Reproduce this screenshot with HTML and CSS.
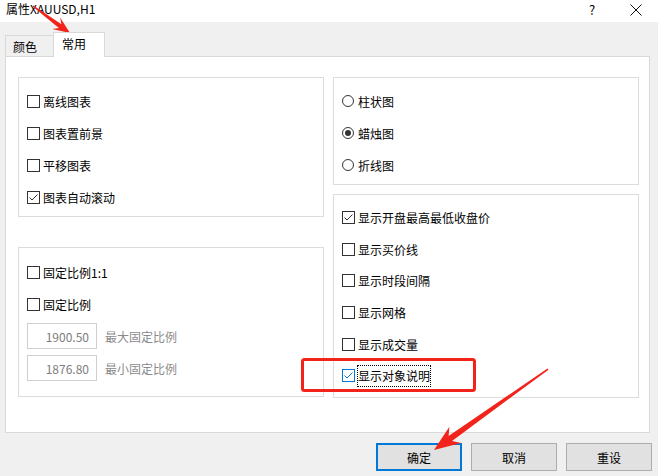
FILE: index.html
```html
<!DOCTYPE html>
<html lang="zh-CN">
<head>
    <meta charset="UTF-8">
    <title>属性XAUUSD,H1</title>
    <link rel="stylesheet" href="styles.css">
</head>
<body>
    <!-- Barra de título -->
    <div class="titlebar">
        <span class="title">属性XAUUSD,H1</span>
        <div class="controls">
            <span class="ctl">?</span>
            <span class="ctl">
                <svg width="12" height="12" viewBox="0 0 12 12"><path d="M0.5 0.5 L11.5 11.5 M11.5 0.5 L0.5 11.5" stroke="#111" stroke-width="1" fill="none"/></svg>
            </span>
        </div>
    </div>

    <!-- Pestañas -->
    <div class="tabbar">
        <div class="tab">颜色</div>
        <div class="tab active">常用</div>
    </div>

    <div class="pane">
        <div class="col">
            <div class="group g-chart">
                <div class="row"><span class="box"></span>离线图表</div>
                <div class="row"><span class="box"></span>图表置前景</div>
                <div class="row"><span class="box"></span>平移图表</div>
                <div class="row"><span class="box checked"><svg viewBox="0 0 11 11"><path d="M1.5 5.5 L4 8 L9.5 2.5" /></svg></span>图表自动滚动</div>
            </div>
            <div class="group g-scale">
                <div class="row"><span class="box"></span>固定比例1:1</div>
                <div class="row"><span class="box"></span>固定比例</div>
                <div class="row"><input class="num" type="text" value="1900.50" readonly><span class="muted">最大固定比例</span></div>
                <div class="row"><input class="num" type="text" value="1876.80" readonly><span class="muted">最小固定比例</span></div>
            </div>
        </div>
        <div class="col">
            <div class="group g-type">
                <div class="row"><span class="radio"></span>柱状图</div>
                <div class="row"><span class="radio on"></span>蜡烛图</div>
                <div class="row"><span class="radio"></span>折线图</div>
            </div>
            <div class="group g-show">
                <div class="row"><span class="box checked"><svg viewBox="0 0 11 11"><path d="M1.5 5.5 L4 8 L9.5 2.5" /></svg></span>显示开盘最高最低收盘价</div>
                <div class="row"><span class="box"></span>显示买价线</div>
                <div class="row"><span class="box"></span>显示时段间隔</div>
                <div class="row"><span class="box"></span>显示网格</div>
                <div class="row"><span class="box"></span>显示成交量</div>
                <div class="row"><span class="box checked hot"><svg viewBox="0 0 11 11"><path d="M1.5 5.5 L4 8 L9.5 2.5" /></svg></span><span class="focus">显示对象说明</span></div>
            </div>
        </div>
    </div>

    <div class="footer">
        <button class="btn default" type="button">确定</button>
        <button class="btn" type="button">取消</button>
        <button class="btn" type="button">重设</button>
    </div>

    <!-- Marcas rojas encima de la captura -->
    <svg class="annot" viewBox="0 0 658 476">
        <polygon points="32.6,6.6 58.9,27.9 52.1,28.9 70,33 60.1,17.5 61.4,24.3 33.4,5.4" fill="#f2231b"/>
        <rect x="302.5" y="359.5" width="172" height="31" rx="2" fill="none" stroke="#f2231b" stroke-width="3"/>
        <polygon points="548.5,369.7 452,440.9 461,443.1 434,450 449.4,426.8 448.6,436 547.5,368.4" fill="#f2231b"/>
    </svg>
</body>
</html>
```

FILE: styles.css
```css
body {
    margin: 0;
    width: 658px;
    height: 476px;
    background-color: #f0f0f0;
    font-family: "Noto Sans CJK SC", "Liberation Sans", sans-serif;
    font-size: 12px;
    color: #000;
    position: relative;
    overflow: hidden;
}
.titlebar {
    height: 22px;
    background-color: #fff;
    display: flex;
    align-items: flex-start;
    padding-left: 6px;
}
.title {
    line-height: 16px;
    padding-top: 1px;
}
.controls {
    margin-left: auto;
    display: flex;
}
.ctl {
    width: 44px;
    height: 17px;
    display: flex;
    align-items: center;
    justify-content: center;
    font-size: 13px;
    padding-top: 1px;
}
.tabbar {
    height: 34px;
    display: flex;
    align-items: flex-end;
    padding-left: 5px;
}
.tab {
    width: 49px;
    height: 21px;
    box-sizing: border-box;
    border: 1px solid #d9d9d9;
    border-bottom: none;
    padding-left: 7px;
    display: flex;
    align-items: center;
}
.tab.active {
    width: 52px;
    height: 25px;
    margin-left: -1px;
    margin-bottom: -1px;
    padding-left: 8px;
    padding-bottom: 4px;
    background-color: #fff;
    position: relative;
    z-index: 1;
}
.pane {
    margin-left: 5px;
    width: 645px;
    height: 377px;
    box-sizing: border-box;
    border: 1px solid #d9d9d9;
    background-color: #fff;
    display: flex;
    gap: 9px;
    padding: 20px 10px 0 12px;
}
.col {
    width: 306px;
    display: flex;
    flex-direction: column;
}
.group {
    box-sizing: border-box;
    border: 1px solid #dcdcdc;
    padding: 7px 0 0 8px;
}
.g-chart {
    height: 140px;
    margin-bottom: 30px;
}
.g-scale {
    height: 150px;
    padding-top: 8px;
}
.g-type {
    height: 108px;
    margin-bottom: 9px;
}
.g-show {
    height: 204px;
    padding-top: 7px;
}
.row {
    height: 32px;
    display: flex;
    align-items: center;
}
.g-show .row {
    height: 31.6px;
}
.box {
    width: 13px;
    height: 13px;
    box-sizing: border-box;
    border: 1px solid #333;
    background-color: #fff;
    margin-right: 3px;
    display: flex;
}
.box svg {
    width: 11px;
    height: 11px;
}
.box svg path {
    fill: none;
    stroke: #333;
    stroke-width: 1;
}
.box.hot {
    border-color: #0078d7;
}
.box.hot svg path {
    stroke: #0078d7;
}
.radio {
    width: 12px;
    height: 12px;
    box-sizing: border-box;
    border: 1px solid #333;
    border-radius: 50%;
    margin-right: 4px;
    display: flex;
    align-items: center;
    justify-content: center;
}
.radio.on::after {
    content: "";
    width: 6px;
    height: 6px;
    border-radius: 50%;
    background-color: #333;
}
.num {
    width: 70px;
    height: 26px;
    box-sizing: border-box;
    margin: 0;
    border: 1px solid #cfcfcf;
    padding: 0 7px 0 0;
    text-align: right;
    font-family: inherit;
    font-size: 12px;
    color: #7d7d7d;
    background-color: #fff;
    outline: none;
}
.muted {
    color: #8a8a8a;
    margin-left: 8px;
}
.focus {
    display: inline-block;
    line-height: 16px;
    padding: 2px 0;
    outline: 1px dotted #000;
}
.footer {
    display: flex;
    justify-content: flex-end;
    gap: 9px;
    padding: 10px 6px 0 0;
}
.btn {
    width: 86px;
    height: 28px;
    box-sizing: border-box;
    margin: 0;
    border: 1px solid #adadad;
    background-color: #e1e1e1;
    font-family: inherit;
    font-size: 12px;
    color: #000;
}
.btn.default {
    border: 2px solid #0078d7;
}
.annot {
    position: absolute;
    left: 0;
    top: 0;
    width: 658px;
    height: 476px;
    pointer-events: none;
}
```
